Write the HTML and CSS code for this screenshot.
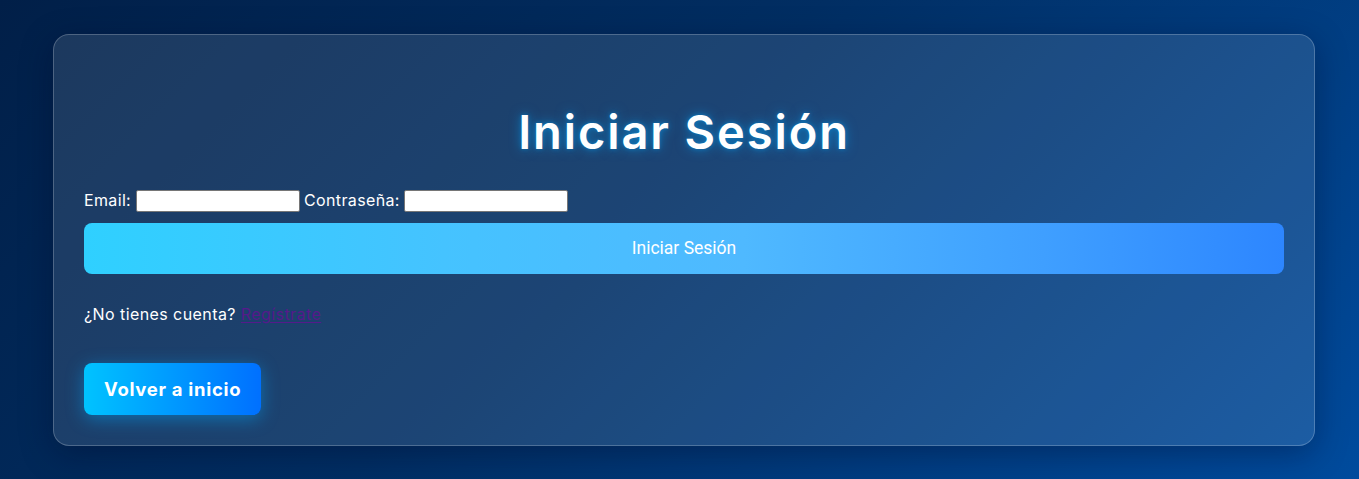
FILE: index.html
```html
<!DOCTYPE html>
<html lang="es">
<head>
<meta charset="utf-8">
<title>Iniciar Sesión</title>
<link rel="stylesheet" href="styles.css">
</head>
<body>
<main class="page">
  <section class="card">
    <h1 class="title">Iniciar Sesión</h1>
    <form class="login-form">
      <div class="fields">
        <label class="field-label">Email:</label> <input class="field-input" type="email"> <label class="field-label">Contraseña:</label> <input class="field-input" type="password">
      </div>
      <button class="submit-btn" type="button">Iniciar Sesión</button>
    </form>
    <p class="register">¿No tienes cuenta? <a class="register-link" href="#">Regístrate</a></p>
    <div class="back-row">
      <a class="back-btn" href="#">Volver a inicio</a>
    </div>
  </section>
</main>
</body>
</html>
```
FILE: styles.css
```css
* { box-sizing: border-box; }
html, body { margin: 0; padding: 0; }
body {
  font-family: Inter, "Noto Sans", sans-serif;
  color: #fff;
  background: linear-gradient(135deg, #011f48 0%, #012e63 45%, #004b9d 100%);
  min-height: 100vh;
}
.page {
  min-height: 100vh;
  display: flex;
  align-items: center;
  padding-left: 53px;
}
.card {
  width: 1262px;
  padding: 30px;
  border: 1px solid rgba(255, 255, 255, 0.22);
  border-radius: 16px;
  background: rgba(255, 255, 255, 0.11);
  box-shadow: 0 8px 32px rgba(0, 10, 40, 0.35);
}
.title {
  margin: 31px 0 20px;
  font-size: 47px;
  line-height: 72px;
  font-weight: 600;
  text-align: center;
  letter-spacing: 1.9px;
  text-shadow: 0 0 12px rgba(0, 170, 255, 0.55), 0 0 4px rgba(0, 170, 255, 0.4);
}
.fields {
  font-size: 16px;
  line-height: 24px;
  height: 24px;
}
.field-label { letter-spacing: 0.35px; }
.field-input {
  width: 164px;
  height: 22px;
  border: 1px solid #767676;
  border-radius: 2px;
  background: #fff;
  vertical-align: middle;
  padding: 1px 2px;
}
.submit-btn {
  display: block;
  width: 100%;
  height: 51px;
  margin-top: 11px;
  border: none;
  border-radius: 8px;
  background: linear-gradient(90deg, #2fd0ff 0%, #45c3ff 30%, #4fb9ff 55%, #3f9fff 80%, #2d86ff 100%);
  color: #fff;
  font-family: Roboto, "Open Sans", sans-serif;
  font-size: 17.5px;
}
.register {
  margin: 29px 0 0;
  font-size: 16px;
  line-height: 22px;
  letter-spacing: 0.42px;
}
.register-link {
  color: #551a8b;
  text-decoration: underline;
  text-decoration-thickness: 1px;
  text-underline-offset: 2px;
}
.back-row { margin-top: 38px; }
.back-btn {
  display: inline-block;
  padding: 12px 20px;
  border-radius: 8px;
  background: linear-gradient(90deg, #00c3ff, #0070ff);
  color: #fff;
  font-size: 18.5px;
  font-weight: 700;
  line-height: 28px;
  letter-spacing: 0.7px;
  text-decoration: none;
  box-shadow: 0 4px 18px rgba(0, 170, 255, 0.45);
}
```
